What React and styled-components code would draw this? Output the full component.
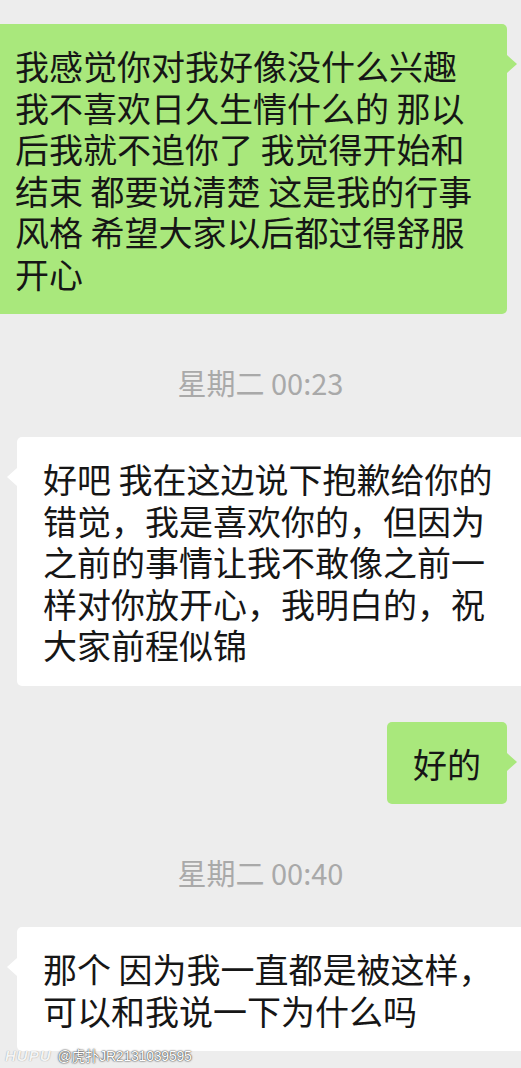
import React from 'react';
import styled, { createGlobalStyle } from 'styled-components';

const GlobalStyle = createGlobalStyle`
    html, body {
        margin: 0;
        padding: 0;
        background: #ededed;
        overflow-x: hidden;
    }
`;

const messages = [
    { kind: 'self', text: '我感觉你对我好像没什么兴趣我不喜欢日久生情什么的 那以后我就不追你了 我觉得开始和结束 都要说清楚 这是我的行事风格 希望大家以后都过得舒服开心' },
    { kind: 'time', text: '星期二 00:23' },
    { kind: 'other', text: '好吧 我在这边说下抱歉给你的错觉，我是喜欢你的，但因为之前的事情让我不敢像之前一样对你放开心，我明白的，祝大家前程似锦' },
    { kind: 'self', text: '好的' },
    { kind: 'time', text: '星期二 00:40' },
    { kind: 'other', text: '那个 因为我一直都是被这样，可以和我说一下为什么吗' },
];

export default function App() {
    return (
        <>
            <GlobalStyle />
            <Chat>
                {messages.map((m, i) => {
                    if (m.kind === 'time') return <Time key={i}>{m.text}</Time>;
                    return (
                        <Row key={i} self={m.kind === 'self' ? 1 : 0}>
                            <Bubble self={m.kind === 'self' ? 1 : 0}>{m.text}</Bubble>
                        </Row>
                    );
                })}
                <Watermark>
                    <Brand>HUPU</Brand>
                    <span>@虎扑JR2131039595</span>
                </Watermark>
            </Chat>
        </>
    );
}

const Chat = styled.div`
    position: relative;
    width: 521px;
    min-height: 1068px;
    box-sizing: border-box;
    padding-top: 24px;
    display: flex;
    flex-direction: column;
    gap: 36px;
    overflow: hidden;
    background: #ededed;
    font-family: 'Noto Sans CJK SC', 'Noto Sans', sans-serif;
`;

const Row = styled.div`
    display: flex;
    justify-content: ${p => (p.self ? 'flex-end' : 'flex-start')};
    align-items: flex-start;
    padding: ${p => (p.self ? '0 14px 0 0' : '0 0 0 17px')};
`;

const Bubble = styled.div`
    position: relative;
    flex-shrink: 0;
    max-width: 518px;
    box-sizing: border-box;
    padding: 21px 26px 20px;
    border-radius: 5px;
    background: ${p => (p.self ? '#a9e87c' : '#ffffff')};
    color: #161616;
    font-size: 34px;
    line-height: 41.5px;
    word-break: break-all;

    &::after {
        content: '';
        position: absolute;
        top: 31px;
        ${p => (p.self ? 'right: -10px;' : 'left: -10px;')}
        border-top: 9px solid transparent;
        border-bottom: 9px solid transparent;
        ${p => (p.self ? 'border-left: 10px solid #a9e87c;' : 'border-right: 10px solid #ffffff;')}
    }
`;

const Time = styled.div`
    text-align: center;
    color: #a9a9a9;
    font-family: 'Noto Sans CJK SC', Roboto, sans-serif;
    font-size: 29px;
    line-height: 32px;
    margin: 16px 0 3px;
`;

const Watermark = styled.div`
    position: absolute;
    left: 5px;
    bottom: 3px;
    display: flex;
    align-items: center;
    gap: 6px;
    font-family: 'Liberation Sans', 'Noto Sans CJK SC', sans-serif;
    font-size: 14px;
    letter-spacing: -0.2px;
    color: #ffffff;
    text-shadow: 0 0 2px #333, 0 0 1px #333;
`;

const Brand = styled.span`
    font-style: italic;
    font-weight: 700;
    font-size: 15px;
    letter-spacing: 1px;
    color: #f4f4f4;
    text-shadow: 0 0 1px #888;
`;
